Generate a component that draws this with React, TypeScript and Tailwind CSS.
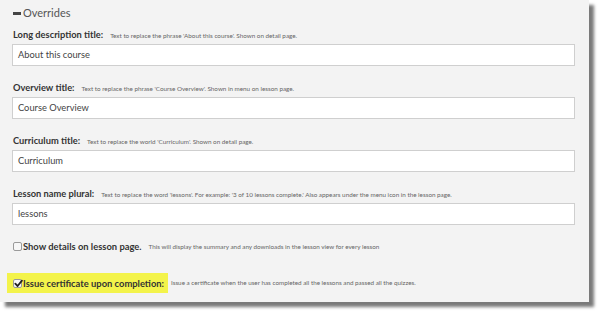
import React from 'react'

// ── Field data ────────────────────────────────────────────────────────────────
const FIELDS = [
  {
    label: 'Long description title:',
    help: "Text to replace the phrase 'About this course'. Shown on detail page.",
    value: 'About this course',
  },
  {
    label: 'Overview title:',
    help: "Text to replace the phrase 'Course Overview'. Shown in menu on lesson page.",
    value: 'Course Overview',
  },
  {
    label: 'Curriculum title:',
    help: "Text to replace the world 'Curriculum'. Shown on detail page.",
    value: 'Curriculum',
  },
  {
    label: 'Lesson name plural:',
    help: "Text to replace the word 'lessons'. For example: '3 of 10 lessons complete.' Also appears under the menu icon in the lesson page.",
    value: 'lessons',
  },
]

function Checkbox({ checked }: { checked?: boolean }) {
  return (
    <span className="relative inline-flex h-[9px] w-[9px] shrink-0 items-center justify-center rounded-[2px] border border-[#9a9a9a] bg-[#f7f7f7]">
      {checked && (
        <svg viewBox="0 0 10 10" className="absolute -top-[1px] left-0 h-[9px] w-[9px]">
          <path d="M1.5 5.2 L4 7.8 L8.8 1.8" fill="none" stroke="#222" strokeWidth="2" strokeLinecap="round" strokeLinejoin="round" />
        </svg>
      )}
    </span>
  )
}

export default function App() {
  return (
    <div className="h-[313px] w-[599px] overflow-hidden bg-white font-['Lato',sans-serif]">
      <div className="h-[302px] w-[589px] bg-[#f3f3f3] pl-[12px] pt-[6px] shadow-[5px_5px_3px_#7a7a7a]">
        {/* Section heading */}
        <div className="flex h-[14px] items-center text-[11px] leading-[14px] text-[#555]">
          <span className="ml-[1px] mr-[2px] h-[3px] w-[8px] bg-[#444]" />
          <span>Overrides</span>
        </div>

        {/* Text fields */}
        {FIELDS.map((f, i) => (
          <div key={f.label} className={i === 0 ? 'mt-[8px]' : 'mt-[15px]'}>
            <div className="flex h-[13px] items-baseline whitespace-nowrap pl-[1px] leading-[13px]">
              <span className="text-[9.3px] font-bold text-[#333]">{f.label}</span>
              <span className="ml-[7px] text-[6.3px] text-[#666]">{f.help}</span>
            </div>
            <div className="mt-[3px] flex h-[22px] w-[563px] items-center border border-[#cfcfcf] bg-white pl-[5px] text-[9.3px] text-[#444]">
              {f.value}
            </div>
          </div>
        ))}

        {/* Show details */}
        <div className="mt-[15px] flex h-[13px] items-center whitespace-nowrap pl-[1px] leading-[13px]">
          <Checkbox />
          <span className="ml-[1px] text-[9.4px] font-bold text-[#333]">Show details on lesson page.</span>
          <span className="ml-[7px] text-[6.3px] text-[#666]">This will display the summary and any downloads in the lesson view for every lesson</span>
        </div>

        {/* Issue certificate */}
        <div className="mt-[20px] flex items-center whitespace-nowrap">
          <div className="-ml-[5px] flex h-[20px] w-[161px] items-center bg-[#f3f34a] pl-[6px]">
            <Checkbox checked />
            <span className="ml-[1px] text-[9.4px] font-bold leading-[13px] text-[#333]">
              Issue certificate upon completion:
            </span>
          </div>
          <span className="ml-[3px] text-[6.3px] text-[#666]">
            Issue a certificate when the user has completed all the lessons and passed all the quizzes.
          </span>
        </div>
      </div>
    </div>
  )
}
